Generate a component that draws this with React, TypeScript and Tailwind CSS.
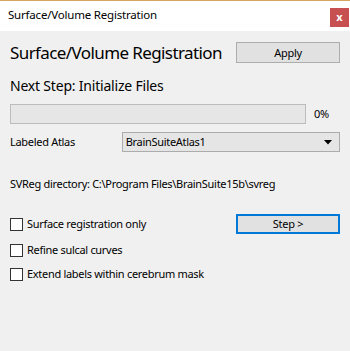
export default function App() {
  return (
    <div
      className="w-[350px] h-[351px] bg-[#f0f0f0] flex flex-col text-black"
      style={{ fontFamily: '"Noto Sans", "Open Sans", sans-serif' }}
    >
      {/* title bar */}
      <div className="h-[31px] bg-white border-t border-[#d7a55c] flex items-start justify-between">
        <span className="ml-[8px] mt-[6px] text-[11.5px] tracking-[-0.2px] leading-[16px]">Surface/Volume Registration</span>
        <div className="mt-[7px] mr-[1px] w-[19px] h-[19px] bg-[#c75050] text-white text-[11px] font-bold leading-[17px] text-center">
          x
        </div>
      </div>

      <div className="flex flex-col px-[10px] text-[11px] leading-[16px] tracking-[-0.3px]">
        <div className="flex items-start justify-between mt-[11px]">
          <h1 className="text-[17px] tracking-[-0.6px] leading-[22px] whitespace-nowrap">Surface/Volume Registration</h1>
          <button className="w-[104px] h-[21px] bg-[#e1e1e1] border border-[#adadad] text-[11px] leading-[19px]">
            Apply
          </button>
        </div>

        <div className="mt-[12px] text-[14px] tracking-[-0.2px] leading-[20px]">Next Step: Initialize Files</div>

        <div className="mt-[8px] flex items-center">
          <div className="w-[296px] h-[20px] bg-[#e6e6e6] border border-[#bcbcbc]" />
          <span className="ml-[8px]">0%</span>
        </div>

        <div className="mt-[8px] flex items-center">
          <span className="w-[112px]">Labeled Atlas</span>
          <div className="w-[219px] h-[20px] bg-[#e5e5e5] border border-[#acacac] flex items-center justify-between pl-[3px] pr-[7px]">
            <span>BrainSuiteAtlas1</span>
            <svg width="8" height="5" viewBox="0 0 8 5">
              <path d="M0 0 H8 L4 4.5 Z" fill="#000" />
            </svg>
          </div>
        </div>

        <div className="mt-[24px]">SVReg directory: C:\Program Files\BrainSuite15b\svreg</div>

        <div className="mt-[22px] flex items-center justify-between">
          <label className="flex items-center gap-[4px]">
            <span className="w-[13px] h-[13px] border border-[#333] bg-white" />
            Surface registration only
          </label>
          <button className="w-[104px] h-[20px] bg-[#e1e1e1] border-2 border-[#0078d7] leading-[16px]">
            Step &gt;
          </button>
        </div>

        <label className="mt-[8px] flex items-center gap-[4px]">
          <span className="w-[13px] h-[13px] border border-[#333] bg-white" />
          Refine sulcal curves
        </label>

        <label className="mt-[8px] flex items-center gap-[4px]">
          <span className="w-[13px] h-[13px] border border-[#333] bg-white" />
          Extend labels within cerebrum mask
        </label>
      </div>
    </div>
  );
}
